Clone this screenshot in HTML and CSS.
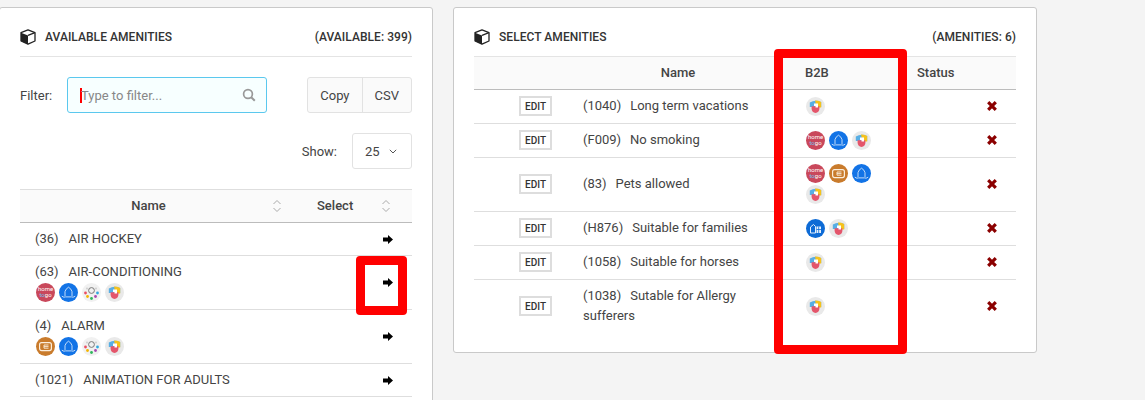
FILE: index.html
```html
<!DOCTYPE html>
<html lang="en">
<head>
  <meta charset="UTF-8" />
  <title>Amenities</title>
  <link rel="stylesheet" href="styles.css">
</head>
<body>
  <svg class="defs" width="0" height="0">
    <symbol id="box" viewBox="0 0 16 16">
      <path d="M8 .8 15 3.6V12L8 15.2 1 12V3.6Z" fill="#fff" stroke="#222" stroke-width="1.3" stroke-linejoin="round"/>
      <path d="M1 3.8 8 6.4V15.2L1 12Z" fill="#222"/>
      <path d="M8 6.4 15 3.6" stroke="#222" stroke-width="1.2"/>
    </symbol>
    <symbol id="i-blue" viewBox="0 0 19 19">
      <circle cx="9.5" cy="9.5" r="9.5" fill="#1273e6"/>
      <path d="M6 13V8.6Q6.5 6 9.5 4.2 12.5 6 13 8.6V13" fill="none" stroke="#d5e6fb" stroke-width=".9"/>
      <path d="M2.8 13.2Q5 14.8 6.5 13.9H12.5Q14 14.8 16.2 13.2" fill="none" stroke="#d5e6fb" stroke-width=".9"/>
    </symbol>
    <symbol id="i-dots" viewBox="0 0 19 19">
      <circle cx="9.5" cy="9.5" r="9.5" fill="#f1f1f1"/>
      <circle cx="9.5" cy="7.5" r="2.9" fill="none" stroke="#777" stroke-width="1"/>
      <circle cx="3.5" cy="10" r="1.4" fill="#ea4f63"/>
      <circle cx="5.5" cy="13.5" r="1.4" fill="#f4b400"/>
      <circle cx="9.5" cy="15.5" r="1.4" fill="#2eb55c"/>
      <circle cx="13.5" cy="13.5" r="1.4" fill="#a848b0"/>
      <circle cx="15.5" cy="10" r="1.4" fill="#30a8e0"/>
      <circle cx="5" cy="5.5" r=".9" fill="#ccc"/>
      <circle cx="14" cy="5.5" r=".9" fill="#ccc"/>
    </symbol>
    <symbol id="i-shield" viewBox="0 0 19 19">
      <circle cx="9.5" cy="9.5" r="9.5" fill="#e9e9e9"/>
      <path d="M3.8 5.6Q9 2.4 15.2 5V10H3.8Z" fill="#58aee4"/>
      <path d="M9 3.6Q12.4 3.6 15.2 5V10.4H10.5Z" fill="#f6c21c"/>
      <path d="M5.6 9.2H13.4V12Q13 15.4 9.5 16 6 15.4 5.6 12Z" fill="#e4556b"/>
      <path d="M8 6.5H12V10.5H9.5V9H8Z" fill="#fff"/>
    </symbol>
    <symbol id="i-orange" viewBox="0 0 19 19">
      <circle cx="9.5" cy="9.5" r="9.5" fill="#c97b2c"/>
      <rect x="3.6" y="5.6" width="11.8" height="8" rx="2" fill="none" stroke="#fbeedd" stroke-width="1.2"/>
      <path d="M8 8H12.5M8 9.6H12.5M8 11.2H12.5M8 8V11.2" stroke="#fbeedd" stroke-width=".9"/>
    </symbol>
    <symbol id="i-house" viewBox="0 0 19 19">
      <circle cx="9.5" cy="9.5" r="9.5" fill="#0d6bd6"/>
      <path d="M4.5 14V8L7.5 5.5 9.5 7.5V14Z" fill="none" stroke="#e4f0fd" stroke-width="1"/>
      <rect x="10.5" y="7.5" width="4.5" height="6.5" fill="#e4f0fd"/>
      <path d="M12.7 7.5V14M10.5 10.5H15" stroke="#0d6bd6" stroke-width=".8"/>
    </symbol>
    <symbol id="arrow" viewBox="0 0 10 9">
      <path d="M0 2.6H5V0L10 4.5 5 9V6.4H0Z" fill="#000"/>
    </symbol>
    <symbol id="cross" viewBox="0 0 12 12">
      <path d="M2.2 2.2 9.8 9.8M9.8 2.2 2.2 9.8" stroke="#8b0000" stroke-width="3.2"/>
    </symbol>
    <symbol id="sort" viewBox="0 0 10 14">
      <path d="M1.5 5 5 1.5 8.5 5M1.5 9 5 12.5 8.5 9" fill="none" stroke="#aaa" stroke-width="1"/>
    </symbol>
  </svg>

  <div class="page">
    <section class="card card-left">
      <header class="card-head">
        <h2><svg class="box"><use href="#box"/></svg>AVAILABLE AMENITIES</h2>
        <span class="count">(AVAILABLE: 399)</span>
      </header>

      <div class="filter-row">
        <label class="filter-label">Filter:</label>
        <div class="filter-input">
          <span class="caret"></span>
          <span class="placeholder">Type to filter...</span>
          <svg class="search" viewBox="0 0 14 14"><circle cx="6" cy="6" r="4.4" fill="none" stroke="#999" stroke-width="1.7"/><path d="M9.2 9.2 12.8 12.8" stroke="#999" stroke-width="2"/></svg>
        </div>
        <div class="btn-group">
          <span class="btn">Copy</span>
          <span class="btn">CSV</span>
        </div>
      </div>

      <div class="show-row">
        <span>Show:</span>
        <div class="show-select">25 <svg class="chevron" viewBox="0 0 8 5"><path d="M.8.8 4 4 7.2.8" fill="none" stroke="#555" stroke-width="1"/></svg></div>
      </div>

      <table class="list list-left">
        <thead>
          <tr>
            <th class="th-name"><span>Name</span><svg class="sort"><use href="#sort"/></svg></th>
            <th class="th-select"><span>Select</span><svg class="sort"><use href="#sort"/></svg></th>
          </tr>
        </thead>
        <tbody>
          <tr class="row-short">
            <td><span class="code">(36)</span>AIR HOCKEY</td>
            <td class="go"><svg class="arrow"><use href="#arrow"/></svg></td>
          </tr>
          <tr>
            <td>
              <span class="code">(63)</span>AIR-CONDITIONING
              <div class="logos">
                <svg class="logo" viewBox="0 0 19 19"><circle cx="9.5" cy="9.5" r="9.5" fill="#c9485b"/><text x="9.5" y="8" class="logo-text" fill="#fff">home</text><text x="9.5" y="14" class="logo-text" fill="#fff"><tspan fill="#6cc0ee">to</tspan>go</text></svg>
                <svg class="logo"><use href="#i-blue"/></svg>
                <svg class="logo"><use href="#i-dots"/></svg>
                <svg class="logo"><use href="#i-shield"/></svg>
              </div>
            </td>
            <td class="go"><svg class="arrow"><use href="#arrow"/></svg></td>
          </tr>
          <tr>
            <td>
              <span class="code">(4)</span>ALARM
              <div class="logos">
                <svg class="logo"><use href="#i-orange"/></svg>
                <svg class="logo"><use href="#i-blue"/></svg>
                <svg class="logo"><use href="#i-dots"/></svg>
                <svg class="logo"><use href="#i-shield"/></svg>
              </div>
            </td>
            <td class="go"><svg class="arrow"><use href="#arrow"/></svg></td>
          </tr>
          <tr class="row-short">
            <td><span class="code">(1021)</span>ANIMATION FOR ADULTS</td>
            <td class="go"><svg class="arrow"><use href="#arrow"/></svg></td>
          </tr>
        </tbody>
      </table>
      <div class="mark mark-arrow"></div>
    </section>

    <section class="card card-right">
      <header class="card-head">
        <h2><svg class="box"><use href="#box"/></svg>SELECT AMENITIES</h2>
        <span class="count">(AMENITIES: 6)</span>
      </header>

      <table class="list list-right">
        <colgroup>
          <col class="col-edit"><col class="col-name"><col class="col-b2b"><col class="col-status"><col>
        </colgroup>
        <thead>
          <tr>
            <th></th>
            <th class="th-title">Name</th>
            <th>B2B</th>
            <th>Status</th>
            <th></th>
          </tr>
        </thead>
        <tbody>
          <tr>
            <td class="edit-cell"><span class="edit">EDIT</span></td>
            <td class="name-cell"><span class="code">(1040)</span>Long term vacations</td>
            <td><div class="logos"><svg class="logo"><use href="#i-shield"/></svg></div></td>
            <td></td>
            <td class="del"><svg class="cross"><use href="#cross"/></svg></td>
          </tr>
          <tr>
            <td class="edit-cell"><span class="edit">EDIT</span></td>
            <td class="name-cell"><span class="code">(F009)</span>No smoking</td>
            <td><div class="logos">
              <svg class="logo" viewBox="0 0 19 19"><circle cx="9.5" cy="9.5" r="9.5" fill="#c9485b"/><text x="9.5" y="8" class="logo-text" fill="#fff">home</text><text x="9.5" y="14" class="logo-text" fill="#fff"><tspan fill="#6cc0ee">to</tspan>go</text></svg>
              <svg class="logo"><use href="#i-blue"/></svg>
              <svg class="logo"><use href="#i-shield"/></svg>
            </div></td>
            <td></td>
            <td class="del"><svg class="cross"><use href="#cross"/></svg></td>
          </tr>
          <tr class="row-tall">
            <td class="edit-cell"><span class="edit">EDIT</span></td>
            <td class="name-cell"><span class="code">(83)</span>Pets allowed</td>
            <td><div class="logos logos-wrap">
              <svg class="logo" viewBox="0 0 19 19"><circle cx="9.5" cy="9.5" r="9.5" fill="#c9485b"/><text x="9.5" y="8" class="logo-text" fill="#fff">home</text><text x="9.5" y="14" class="logo-text" fill="#fff"><tspan fill="#6cc0ee">to</tspan>go</text></svg>
              <svg class="logo"><use href="#i-orange"/></svg>
              <svg class="logo"><use href="#i-blue"/></svg>
              <svg class="logo"><use href="#i-shield"/></svg>
            </div></td>
            <td></td>
            <td class="del"><svg class="cross"><use href="#cross"/></svg></td>
          </tr>
          <tr>
            <td class="edit-cell"><span class="edit">EDIT</span></td>
            <td class="name-cell"><span class="code">(H876)</span>Suitable for families</td>
            <td><div class="logos"><svg class="logo"><use href="#i-house"/></svg><svg class="logo"><use href="#i-shield"/></svg></div></td>
            <td></td>
            <td class="del"><svg class="cross"><use href="#cross"/></svg></td>
          </tr>
          <tr>
            <td class="edit-cell"><span class="edit">EDIT</span></td>
            <td class="name-cell"><span class="code">(1058)</span>Suitable for horses</td>
            <td><div class="logos"><svg class="logo"><use href="#i-shield"/></svg></div></td>
            <td></td>
            <td class="del"><svg class="cross"><use href="#cross"/></svg></td>
          </tr>
          <tr class="row-last">
            <td class="edit-cell"><span class="edit">EDIT</span></td>
            <td class="name-cell"><span class="code">(1038)</span>Sutable for Allergy<br>sufferers</td>
            <td><div class="logos"><svg class="logo"><use href="#i-shield"/></svg></div></td>
            <td></td>
            <td class="del"><svg class="cross"><use href="#cross"/></svg></td>
          </tr>
        </tbody>
      </table>
      <div class="mark mark-b2b"></div>
    </section>
  </div>
</body>
</html>
```

FILE: styles.css
```css
* {
  margin: 0;
  padding: 0;
  box-sizing: border-box;
}

html, body {
  height: 400px;
  overflow: hidden;
}

body {
  background: #f4f4f4;
  font-family: Roboto, sans-serif;
  font-size: 13px;
  color: #444;
}

.defs {
  position: absolute;
}

.logo-text {
  font-family: Roboto, sans-serif;
  font-size: 6px;
  text-anchor: middle;
}

.page {
  display: flex;
  align-items: flex-start;
  gap: 20px;
  padding-top: 7px;
}

.card {
  position: relative;
  background: #fff;
  border: 1px solid #c9c9c9;
  border-radius: 3px;
  flex: none;
}

.card-left {
  width: 434px;
  height: 420px;
  margin-left: -1px;
  padding: 0 20px;
}

.card-right {
  width: 584px;
  height: 346px;
  padding: 0 20px;
}

.card-head {
  display: flex;
  justify-content: space-between;
  align-items: center;
  height: 49px;
  padding-top: 10px;
  border-bottom: 1px solid #e4e4e4;
  font-size: 12px;
  font-weight: 500;
  letter-spacing: .05px;
  color: #333;
}

.card-head h2 {
  display: flex;
  align-items: center;
  font-size: 12px;
  font-weight: 500;
}

.box {
  width: 16px;
  height: 16px;
  margin-right: 9px;
}

.filter-row {
  display: flex;
  align-items: center;
  margin-top: 20px;
}

.filter-label {
  width: 47px;
}

.filter-input {
  position: relative;
  display: flex;
  align-items: center;
  width: 200px;
  height: 36px;
  padding-left: 12px;
  background: #f7ffff;
  border: 1px solid #5bc8ee;
  border-radius: 3px;
  color: #888;
  font-size: 13px;
}

.caret {
  width: 2px;
  height: 15px;
  margin-right: -1px;
  background: #f00;
}

.search {
  position: absolute;
  right: 10px;
  top: 10px;
  width: 14px;
  height: 14px;
}

.btn-group {
  display: flex;
  height: 36px;
  margin-left: auto;
  background: #fafafa;
  border: 1px solid #e2e2e2;
  border-radius: 3px;
}

.btn {
  display: flex;
  align-items: center;
  justify-content: center;
  height: 100%;
  font-size: 13px;
  padding: 0 12px;
}

.btn + .btn {
  border-left: 1px solid #e2e2e2;
}

.show-row {
  display: flex;
  align-items: center;
  justify-content: flex-end;
  gap: 15px;
  margin-top: 20px;
}

.show-select {
  display: flex;
  align-items: center;
  justify-content: space-between;
  width: 60px;
  height: 36px;
  padding: 0 14px 0 12px;
  border: 1px solid #e2e2e2;
  border-radius: 3px;
  font-size: 13px;
}

.chevron {
  width: 8px;
  height: 5px;
}

.list {
  width: 100%;
  border-collapse: collapse;
  table-layout: fixed;
}

.list th {
  height: 33px;
  background: #fafafa;
  font-size: 13px;
  font-weight: 500;
  text-align: left;
  border-bottom: 1px solid #bcbcbc;
}

.list td {
  border-bottom: 1px solid #dedede;
  vertical-align: middle;
}

.list-left {
  margin-top: 20px;
  border-top: 1px solid #dedede;
}

.list-left th {
  padding-bottom: 2px;
}

.list-left td {
  height: 54px;
  padding-left: 15px;
  font-size: 13px;
}

.list-left .row-short td {
  height: 33px;
}

.list-left .row-short td:first-child {
  padding-bottom: 1px;
}

.list-left .th-name {
  position: relative;
  text-align: center;
}

.th-name span {
  margin-right: 15px;
}

.th-select {
  position: relative;
  width: 120px;
  padding-left: 25px;
}

.sort {
  position: absolute;
  top: 9px;
  width: 10px;
  height: 14px;
}

.th-name .sort {
  right: 10px;
}

.th-select .sort {
  right: 21px;
}

.code {
  margin-right: 10px;
}

.logos {
  display: flex;
  gap: 4px;
  margin-top: 4px;
}

.list-left .logos {
  margin-left: 1px;
}

.logo {
  width: 19px;
  height: 19px;
  flex: none;
}

.list-right .logos {
  margin: 0 0 0 1px;
}

.list-right .logos-wrap {
  flex-wrap: wrap;
  row-gap: 2px;
  width: 70px;
}

.list .go {
  padding: 0 19px 0 0;
  text-align: right;
}

.arrow {
  display: inline-block;
  width: 10px;
  height: 9px;
}

.list-right th {
  height: 32px;
}

.list-right td {
  height: 34px;
  font-size: 13px;
}

.list-right .code {
  margin-right: 9px;
}

.col-edit {
  width: 109px;
}

.col-name {
  width: 222px;
}

.col-b2b {
  width: 112px;
}

.col-status {
  width: 60px;
}

.list-right .th-title {
  text-align: center;
  padding-right: 32px;
}

.edit-cell {
  padding-left: 45px;
}

.name-cell {
  padding: 0 30px 1px 0;
  line-height: 20px;
}

.list-right .row-tall td {
  height: 54px;
}

.list-right .row-last td {
  height: 54px;
  border-bottom: none;
}

.edit {
  display: flex;
  align-items: center;
  justify-content: center;
  width: 33px;
  height: 20px;
  border: 2px solid #ddd;
  font-size: 10px;
  font-weight: 500;
  color: #333;
}

.del {
  padding-left: 9px;
}

.cross {
  display: block;
  width: 12px;
  height: 12px;
}

.mark {
  position: absolute;
  border: 9px solid #f00;
  border-radius: 4px;
}

.mark-arrow {
  left: 356px;
  top: 248px;
  width: 51px;
  height: 59px;
}

.mark-b2b {
  left: 320px;
  top: 41px;
  width: 133px;
  height: 305px;
}
```
